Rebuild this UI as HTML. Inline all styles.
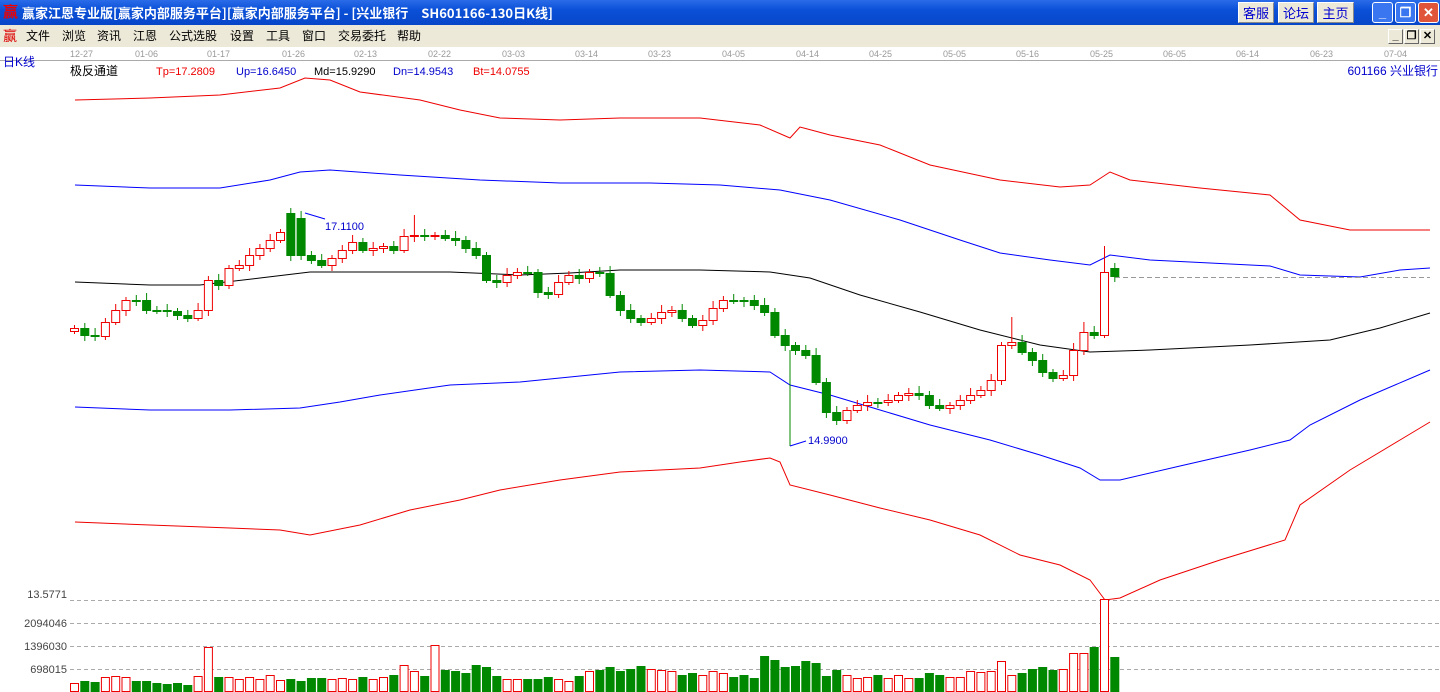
<!DOCTYPE html>
<html><head><meta charset="utf-8"><style>
*{margin:0;padding:0;box-sizing:border-box}
body{width:1440px;height:692px;overflow:hidden;background:#fff;font-family:"Liberation Sans","Noto Sans CJK SC",sans-serif;position:relative}
#title{position:absolute;left:0;top:0;width:1440px;height:25px;background:linear-gradient(#2a6be8,#0a50d8 40%,#0846c8);color:#fff;font-weight:bold;font-size:13px;line-height:25px}
#title .t{position:absolute;left:22px;top:0;font-family:"WenQuanYi Zen Hei","Noto Sans CJK SC",sans-serif}
.tb{position:absolute;top:2px;height:21px;background:#ece9d8;color:#0000d0;font-weight:normal;font-size:13px;line-height:21px;text-align:center;border:1px solid #fff;border-right-color:#888;border-bottom-color:#888}
.wb{position:absolute;top:2px;width:21px;height:21px;border:1px solid #fff;border-radius:3px;background:#3a76f0;color:#fff;text-align:center;line-height:19px;font-size:13px}
#menu{position:absolute;left:0;top:25px;width:1440px;height:22px;background:#ece9d8;font-size:12px;line-height:22px;font-family:"WenQuanYi Zen Hei","Noto Sans CJK SC",sans-serif}
#menu span{position:absolute;top:0}
.mb{position:absolute;top:29px;width:15px;height:15px;background:#ece9d8;border:1px solid #fff;border-right-color:#666;border-bottom-color:#666;font-size:11px;line-height:13px;text-align:center;font-weight:bold}
svg{position:absolute;left:0;top:0}
</style></head><body>
<div id="title"><span style="position:absolute;left:3px;top:0;color:#e00;font-size:15px">赢</span><span class="t">赢家江恩专业版[赢家内部服务平台][赢家内部服务平台] - [兴业银行　SH601166-130日K线]</span>
<div class="tb" style="left:1238px;width:36px">客服</div><div class="tb" style="left:1278px;width:36px">论坛</div><div class="tb" style="left:1317px;width:37px">主页</div>
<div class="wb" style="left:1372px">_</div><div class="wb" style="left:1395px">❐</div><div class="wb" style="left:1418px;background:#e0553a">✕</div></div>
<div id="menu"><span style="left:3px;color:#d00;font-size:14px">赢</span><span style="left:26px">文件</span><span style="left:62px">浏览</span><span style="left:97px">资讯</span><span style="left:133px">江恩</span><span style="left:169px">公式选股</span><span style="left:230px">设置</span><span style="left:266px">工具</span><span style="left:302px">窗口</span><span style="left:338px">交易委托</span><span style="left:397px">帮助</span></div>
<div class="mb" style="left:1388px">_</div><div class="mb" style="left:1404px">❐</div><div class="mb" style="left:1420px">✕</div>
<svg id="s" width="1440" height="692" style="top:0">
<line x1="0" y1="60.5" x2="1440" y2="60.5" stroke="#aaa"/>
<g font-size="9" fill="#999" font-family="Liberation Sans">
<text x="70" y="57">12-27</text><text x="135" y="57">01-06</text><text x="207" y="57">01-17</text><text x="282" y="57">01-26</text><text x="354" y="57">02-13</text><text x="428" y="57">02-22</text><text x="502" y="57">03-03</text><text x="575" y="57">03-14</text><text x="648" y="57">03-23</text><text x="722" y="57">04-05</text><text x="796" y="57">04-14</text><text x="869" y="57">04-25</text><text x="943" y="57">05-05</text><text x="1016" y="57">05-16</text><text x="1090" y="57">05-25</text><text x="1163" y="57">06-05</text><text x="1236" y="57">06-14</text><text x="1310" y="57">06-23</text><text x="1384" y="57">07-04</text></g>
<text x="3" y="66" font-size="12" fill="#00c" font-family="Liberation Sans,Noto Sans CJK SC">日K线</text>
<text x="70" y="75" font-size="12" fill="#000" font-family="Liberation Sans,Noto Sans CJK SC">极反通道</text>
<g font-size="11" font-family="Liberation Sans"><text x="156" y="75" fill="#e00">Tp=17.2809</text><text x="236" y="75" fill="#00c">Up=16.6450</text><text x="314" y="75" fill="#000">Md=15.9290</text><text x="393" y="75" fill="#00c">Dn=14.9543</text><text x="473" y="75" fill="#e00">Bt=14.0755</text></g>
<text x="1438" y="75" text-anchor="end" font-size="12" fill="#00c" font-family="Liberation Sans,Noto Sans CJK SC">601166 兴业银行</text>
<g fill="none" stroke-width="1">
<polyline stroke="#e00" points="75,100 150,98 220,95 280,88 305,78 330,80 360,92 420,100 460,110 500,118 560,120 620,118 700,118 760,125 790,138 800,127 830,135 880,145 930,165 1000,180 1060,187 1090,185 1110,172 1130,180 1200,188 1270,195 1300,220 1350,230 1430,230"/>
<polyline stroke="#00f" points="75,185 150,188 220,188 270,180 300,172 330,170 400,175 480,180 560,183 650,183 720,185 780,190 830,200 900,220 960,240 1000,253 1050,260 1090,265 1110,255 1150,260 1270,266 1300,275 1360,277 1400,270 1430,268"/>
<polyline stroke="#000" points="75,282 150,285 200,285 260,278 310,272 360,272 450,272 520,275 570,273 620,270 700,270 770,272 810,278 860,295 920,312 980,330 1040,345 1090,352 1150,350 1250,345 1330,340 1380,328 1430,313"/>
<polyline stroke="#00f" points="75,407 150,410 230,410 300,408 340,402 380,395 450,385 520,382 570,377 620,372 700,370 770,372 790,385 830,395 880,410 930,425 990,440 1040,455 1080,468 1100,480 1120,480 1180,466 1250,450 1290,440 1310,425 1360,400 1430,370"/>
<polyline stroke="#e00" points="75,522 150,525 230,528 280,530 310,535 360,525 410,510 460,500 500,490 560,480 620,472 700,468 740,462 770,458 780,462 790,485 830,495 880,508 930,520 980,535 1020,555 1060,565 1090,580 1105,600 1120,598 1160,580 1220,560 1285,540 1300,505 1350,470 1400,440 1430,422"/>
<line x1="1115" y1="277.5" x2="1430" y2="277.5" stroke="#999" stroke-dasharray="5,3"/>
<polyline stroke="#00f" points="305,213 325,219"/><polyline stroke="#080" points="790,350 790,446"/><polyline stroke="#00f" points="790,446 806,441"/>
</g>
<text x="325" y="230" font-size="11" fill="#00c" font-family="Liberation Sans">17.1100</text>
<text x="808" y="444" font-size="11" fill="#00c" font-family="Liberation Sans">14.9900</text>
<g stroke="#aaa" stroke-dasharray="4,3"><line x1="70" y1="600.5" x2="1440" y2="600.5"/><line x1="70" y1="623.5" x2="1440" y2="623.5"/><line x1="70" y1="646.5" x2="1440" y2="646.5"/><line x1="70" y1="669.5" x2="1440" y2="669.5"/></g>
<g font-size="11" fill="#444" font-family="Liberation Sans" text-anchor="end"><text x="67" y="598">13.5771</text><text x="67" y="627">2094046</text><text x="67" y="650">1396030</text><text x="67" y="673">698015</text></g>
<g id="c"></g>
</svg>
<script>
var Y=[328,335,336,322,310,300,300,310,310,311,315,318,310,280,285,268,265,255,248,240,232,218,255,260,265,258,250,242,250,248,246,250,236,235,236,235,238,240,248,255,280,282,275,272,272,292,294,282,275,278,272,273,295,310,318,322,318,312,310,318,325,320,308,300,300,300,305,312,335,345,350,355,382,412,420,410,405,402,402,400,395,393,395,405,408,405,400,395,390,380,345,342,352,360,372,378,375,350,332,335,275,268];
var V=[8,10,9,14,15,14,10,10,8,7,8,6,15,44,14,14,12,14,12,16,11,12,10,13,13,12,13,12,14,12,14,16,26,20,15,46,21,20,18,26,24,15,12,12,12,12,14,12,10,15,20,21,24,20,22,25,22,21,20,16,18,16,20,18,14,16,13,35,31,24,25,30,28,15,21,16,13,14,16,13,16,13,13,18,16,14,14,20,19,20,30,16,18,22,24,21,22,38,44,92,34];
var g='',n=Y.length;
V[n-1]=34;V[n-2]=92;V[n-3]=44;V[n-4]=38;
for(var i=0;i<n;i++){var x=70+i*10.3,o=i?Y[i-1]:Y[0]+3,c=Y[i];if(i==21){o=213;c=255;}if(i==n-1){o=268;c=276;}if(i==n-2){o=335;c=272;}
var up=c<o,t=Math.min(o,c),h=Math.max(Math.abs(o-c),1),col=up?'#e00':'#080';
var hi=t-3-(i*7%5),lo=t+h+3+(i*3%4);if(i==33)hi=215;if(i==n-2)hi=246;if(i==91)hi=317;if(i==98)hi=322;
g+='<line x1="'+(x+4.5)+'" y1="'+hi+'" x2="'+(x+4.5)+'" y2="'+lo+'" stroke="'+col+'"/>';
g+='<rect x="'+(x+0.5)+'" y="'+(t+0.5)+'" width="8" height="'+h+'" fill="'+(up?'#fff':'#080')+'" stroke="'+col+'"/>';
var v=V[i]||10;g+='<rect x="'+(x+0.5)+'" y="'+(691-v+0.5)+'" width="8" height="'+v+'" fill="'+(up?'#fff':'#080')+'" stroke="'+col+'"/>';}
document.getElementById('c').innerHTML=g;
</script>
</body></html>
